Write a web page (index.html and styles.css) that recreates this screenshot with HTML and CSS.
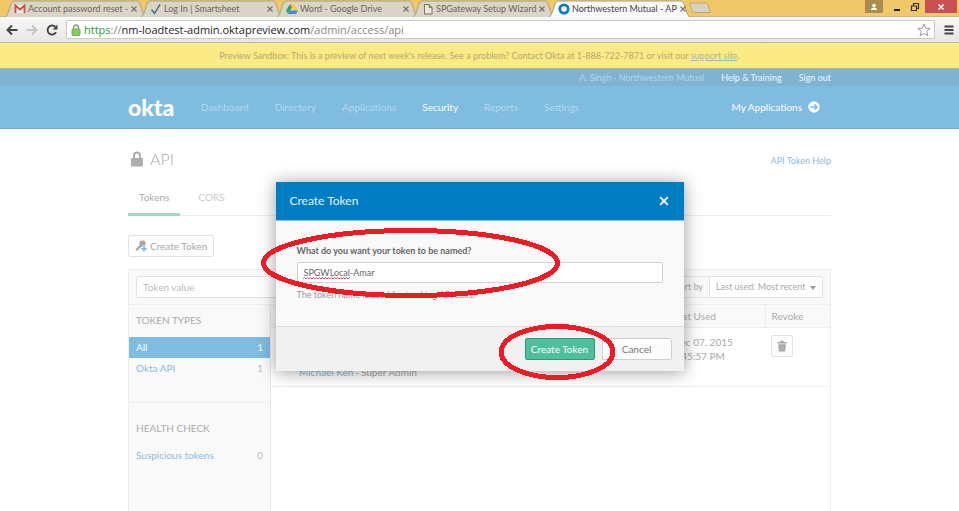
FILE: index.html
```html
<!DOCTYPE html>
<html lang="en">
<head>
<meta charset="utf-8">
<title>Northwestern Mutual - API</title>
<link rel="stylesheet" href="styles.css">
</head>
<body>
<div class="browser">
  <div class="tabstrip">
    <div class="tab">
      <svg class="tab-shape" viewBox="0 0 141 17" preserveAspectRatio="none"><path d="M0 17 Q2 16 3 13 L6 4 Q7 1 9 1 H132 Q134 1 135 4 L138 13 Q139 16 141 17"/></svg>
      <svg class="fav" viewBox="0 0 12 12"><path d="M1 2h10v8H1z" fill="#f3efe9"/><path d="M1.500 10V2.500L6 6.500l4.500-4V10" fill="none" stroke="#d54b3d" stroke-width="1.800"/></svg>
      <span class="tab-title">Account password reset -</span><button class="tab-close" aria-label="Close tab"><svg viewBox="0 0 8 8"><path d="M1.500 1.500l5 5m0-5l-5 5"/></svg></button>
    </div>
    <div class="tab">
      <svg class="tab-shape" viewBox="0 0 141 17" preserveAspectRatio="none"><path d="M0 17 Q2 16 3 13 L6 4 Q7 1 9 1 H132 Q134 1 135 4 L138 13 Q139 16 141 17"/></svg>
      <svg class="fav" viewBox="0 0 12 12"><path d="M1.500 6.500L4.500 10.500L10 1.500" fill="none" stroke="#4d7186" stroke-width="1.500"/></svg>
      <span class="tab-title">Log In | Smartsheet</span><button class="tab-close" aria-label="Close tab"><svg viewBox="0 0 8 8"><path d="M1.500 1.500l5 5m0-5l-5 5"/></svg></button>
    </div>
    <div class="tab">
      <svg class="tab-shape" viewBox="0 0 141 17" preserveAspectRatio="none"><path d="M0 17 Q2 16 3 13 L6 4 Q7 1 9 1 H132 Q134 1 135 4 L138 13 Q139 16 141 17"/></svg>
      <svg class="fav" viewBox="0 0 12 12"><path d="M4 1h4l4 6.500H8z" fill="#f7cb3c"/><path d="M4 1L0 7.500L2 11L6 4.500z" fill="#33a565"/><path d="M4.200 7.500H12L10 11H2z" fill="#4b84dd"/></svg>
      <span class="tab-title">Word - Google Drive</span><button class="tab-close" aria-label="Close tab"><svg viewBox="0 0 8 8"><path d="M1.500 1.500l5 5m0-5l-5 5"/></svg></button>
    </div>
    <div class="tab">
      <svg class="tab-shape" viewBox="0 0 141 17" preserveAspectRatio="none"><path d="M0 17 Q2 16 3 13 L6 4 Q7 1 9 1 H132 Q134 1 135 4 L138 13 Q139 16 141 17"/></svg>
      <svg class="fav" viewBox="0 0 12 12"><path d="M2.500 1.500h4.500l3 3v6.500h-7.500zM7 1.500v3h3" fill="#edeae0" stroke="#77736a"/></svg>
      <span class="tab-title">SPGateway Setup Wizard</span><button class="tab-close" aria-label="Close tab"><svg viewBox="0 0 8 8"><path d="M1.500 1.500l5 5m0-5l-5 5"/></svg></button>
    </div>
    <div class="tab active">
      <svg class="tab-shape" viewBox="0 0 141 17" preserveAspectRatio="none"><path d="M0 17 Q2 16 3 13 L6 4 Q7 1 9 1 H132 Q134 1 135 4 L138 13 Q139 16 141 17"/></svg>
      <svg class="fav" viewBox="0 0 12 12"><circle cx="6" cy="6" r="4.200" fill="none" stroke="#0b7dc3" stroke-width="2.800"/></svg>
      <span class="tab-title">Northwestern Mutual - AP</span><button class="tab-close" aria-label="Close tab"><svg viewBox="0 0 8 8"><path d="M1.500 1.500l5 5m0-5l-5 5"/></svg></button>
    </div>
    <button class="new-tab" aria-label="New tab"><svg viewBox="0 0 24 12"><path d="M1.500 1H17Q19 1 20 3L22.500 10.500H7Q5 10.500 4 8z" fill="#d8d3c1" stroke="#bfa871"/></svg></button>
    <div class="win-controls">
      <button class="win user" aria-label="User"><svg viewBox="0 0 10 10"><circle cx="5" cy="3.500" r="1.800" fill="#fff"/><path d="M2 8V7q1-1.500 3-1.500T8 7v1z" fill="#fff"/></svg></button>
      <button class="win" aria-label="Minimize"><svg viewBox="0 0 10 10"><path d="M2 8h6" stroke="#222" stroke-width="2"/></svg></button>
      <button class="win" aria-label="Restore"><svg viewBox="0 0 10 10"><path d="M1.500 4h5v4.500h-5zM3.500 3.500v-2h5v5h-2" fill="none" stroke="#333" stroke-width="1.200"/></svg></button>
      <button class="win close" aria-label="Close"><svg viewBox="0 0 10 10"><path d="M2.500 2.500l5 5m0-5l-5 5" stroke="#fff" stroke-width="1.500"/></svg></button>
    </div>
  </div>
  <div class="toolbar">
    <button class="tool" aria-label="Back"><svg viewBox="0 0 12 12"><path d="M11.500 6H2M6 1.500L1.500 6L6 10.500" fill="none" stroke="#444" stroke-width="2"/></svg></button>
    <button class="tool" aria-label="Forward"><svg viewBox="0 0 12 12"><path d="M.5 6H10M6 1.500L10.500 6L6 10.500" fill="none" stroke="#c5c5c5" stroke-width="1.800"/></svg></button>
    <button class="tool" aria-label="Reload"><svg viewBox="0 0 12 12"><path d="M10 8.300A4.500 4.500 0 1 1 9.300 2.800" fill="none" stroke="#444" stroke-width="1.900"/><path d="M11.500 .5V5.500H6.500z" fill="#444"/></svg></button>
    <div class="address">
      <svg class="lock" viewBox="0 0 10 12"><path d="M2.500 6V3.500a2.500 2.500 0 0 1 5 0V6" fill="none" stroke="#8c9a82" stroke-width="1.400"/><rect x="1" y="5" width="8" height="6.500" rx="1" fill="#80cf5c" stroke="#5cae3c" stroke-width=".8"/></svg>
      <span class="url"><span class="secure">https</span>://<b>nm-loadtest-admin.oktapreview.com</b>/admin/access/api</span>
      <svg class="star" viewBox="0 0 14 14"><path d="M7 1l1.700 4.200 4.500.3-3.500 2.900 1.200 4.400L7 10.400l-3.900 2.400 1.200-4.400L.8 5.500l4.500-.3z" fill="#fff" stroke="#999"/></svg>
    </div>
    <button class="tool menu" aria-label="Menu"><svg viewBox="0 0 12 12"><path d="M1.500 2.500h9M1.500 6h9M1.500 9.500h9" stroke="#444" stroke-width="2"/></svg></button>
  </div>
</div>

<div class="banner">Preview Sandbox: This is a preview of next week's release. See a problem? Contact Okta at 1-888-722-7871 or visit our <a href="#">support site</a>.</div>

<header>
  <div class="userbar"><div class="wrap userbar-in"><span class="who">A. Singh · Northwestern Mutual</span><a href="#">Help &amp; Training</a><a href="#">Sign out</a></div></div>
  <div class="navbar"><div class="wrap navbar-in">
    <a class="logo" href="#">okta</a>
    <nav><a href="#">Dashboard</a><a href="#">Directory</a><a href="#">Applications</a><a class="on" href="#">Security</a><a href="#">Reports</a><a href="#">Settings</a></nav>
    <a class="myapps" href="#">My Applications<svg viewBox="0 0 12 12"><circle cx="6" cy="6" r="5.700" fill="#fff"/><path d="M2.500 6H9M6.300 3.200L9.100 6L6.300 8.800" fill="none" stroke="#7fbce0" stroke-width="1.500"/></svg></a>
  </div></div>
</header>

<main class="wrap">
  <div class="page-head">
    <h1><svg viewBox="0 0 12 16"><path d="M3 8V4.500a3 3 0 0 1 6 0V8" fill="none" stroke="#adadad" stroke-width="2"/><rect x="0" y="7" width="12" height="8.500" rx="1" fill="#adadad"/></svg>API</h1>
    <a href="#">API Token Help</a>
  </div>
  <div class="subtabs"><a class="on" href="#">Tokens</a><a href="#">CORS</a></div>
  <button class="btn create"><svg viewBox="0 0 12 12"><path d="M1.200 10.300L6.500 5" stroke="#a6a6a6" stroke-width="2.200"/><circle cx="7.500" cy="3.700" r="3.100" fill="#a6a6a6"/><path d="M9 5.500v6M6 8.500h6" stroke="#fff" stroke-width="3"/><path d="M9 6v5.500M6.200 8.700h5.600" stroke="#76b3dc" stroke-width="1.500"/></svg>Create Token</button>
  <section class="panel">
    <div class="filters">
      <input class="search" type="text" placeholder="Token value" aria-label="Token value">
      <div class="sort"><label for="sort">Sort by</label><div class="select-wrap"><select id="sort"><option>Last used: Most recent</option></select></div></div>
    </div>
    <div class="split">
      <aside>
        <h2>TOKEN TYPES</h2>
        <a class="row on" href="#"><span>All</span><span>1</span></a>
        <a class="row" href="#"><span>Okta API</span><span class="num">1</span></a>
        <h2 class="health">HEALTH CHECK</h2>
        <a class="row" href="#"><span>Suspicious tokens</span><span class="num">0</span></a>
      </aside>
      <table>
        <thead><tr><th></th><th class="used">Last Used</th><th class="revoke">Revoke</th></tr></thead>
        <tbody><tr><td class="owner"><a href="#">Michael Ken</a> · Super Admin</td><td>Dec 07, 2015<br>2:45:57 PM</td><td><button class="btn trash" aria-label="Revoke token"><svg viewBox="0 0 10 12"><path d="M.5 2h9v1.500h-9zM3.500 .7h3V2h-3zM1.200 4.200h7.600L8 11.500H2z" fill="#a5a5a5"/><path d="M3.700 5.500v4.500M5 5.500v4.500M6.300 5.500v4.500" stroke="#c2c2c2" stroke-width=".6"/></svg></button></td></tr></tbody>
      </table>
    </div>
  </section>
</main>

<div class="modal" role="dialog" aria-labelledby="modal-title">
  <div class="modal-head"><h2 id="modal-title">Create Token</h2><button aria-label="Close dialog"><svg viewBox="0 0 10 10"><path d="M1.200 1.200l7.600 7.600m0-7.600L1.200 8.800" stroke="#fff" stroke-width="1.900"/></svg></button></div>
  <div class="modal-body">
    <label for="token-name">What do you want your token to be named?</label>
    <div class="name-field"><input id="token-name" type="text" value="SPGWLocal-Amar" spellcheck="false"><svg class="squiggle" viewBox="0 0 47 3"><path d="M0 2l1.500-1.500L3 2l1.500-1.500L6 2l1.500-1.500L9 2l1.500-1.500L12 2l1.500-1.500L15 2l1.500-1.500L18 2l1.500-1.500L21 2l1.500-1.500L24 2l1.500-1.500L27 2l1.500-1.500L30 2l1.500-1.500L33 2l1.500-1.500L36 2l1.500-1.500L39 2l1.500-1.500L42 2l1.500-1.500L45 2l1.500-1.500" fill="none" stroke="#e5514f"/></svg></div>
    <p>The token name is used for tracking API calls.</p>
  </div>
  <div class="modal-foot"><button class="primary">Create Token</button><button class="cancel">Cancel</button></div>
  <svg class="marks" viewBox="0 0 408 190"><ellipse cx="134.500" cy="81" rx="147" ry="32.500"/><ellipse cx="281" cy="170" rx="56" ry="25.500"/></svg>
</div>
</body>
</html>
```
FILE: styles.css
```css
* { box-sizing: border-box; }
body { display: flex; flex-direction: column; margin: 0; height: 100vh; overflow: hidden; background: #fff; font: 10px/14px Lato, "Liberation Sans", sans-serif; color: #aaa; position: relative; }
a { color: #8dbbdb; text-decoration: none; }
button, input, select { font: inherit; margin: 0; padding: 0; border: 0; background: none; color: inherit; }
button { display: inline-flex; align-items: center; justify-content: center; }
h1, h2, p { margin: 0; font-weight: 400; }
svg { display: block; flex: none; }
.wrap { width: 100%; max-width: 703px; margin: 0 auto; }

.browser { font-family: "Open Sans", "Noto Sans", sans-serif; }
.tabstrip { display: flex; height: 17px; background: #f0c869; padding-left: 5px; border-bottom: 1px solid #c9b88e; }
.tab { position: relative; display: flex; align-items: center; flex: 0 1 141px; min-width: 0; height: 17px; padding: 1px 8px 0 9px; margin-right: -5px; gap: 2px; color: #69655a; font-family: Lato, sans-serif; font-size: 9px; }
.tab-shape { position: absolute; left: 0; top: 0; width: 100%; height: 17px; fill: #d9d5c7; stroke: #aa9f80; }
.tab > :not(.tab-shape) { position: relative; }
.fav { width: 12px; height: 12px; }
.tab-title { flex: 1; white-space: nowrap; }
.tab-close svg { width: 8px; height: 8px; stroke: #77736a; stroke-width: 1.2; }
.tab.active { z-index: 1; color: #444; }
.tab.active .tab-shape { fill: #f8f8f8; }
.new-tab svg { width: 24px; height: 12px; }
.new-tab { margin-left: 3px; }
.win-controls { display: flex; margin-left: auto; padding-right: 2px; height: 13px; }
.win { width: 18px; }
.win svg { width: 10px; height: 10px; }
.user { background: #a88d4c; margin-right: 5px; }
.close { width: 32px; background: #c95052; margin-left: 1px; }
.toolbar { display: flex; align-items: center; height: 26px; padding: 0 4px 0 6px; gap: 8px; background: linear-gradient(#f8f8f8, #e6e6e6); border-bottom: 1px solid #b9b9ae; }
.tool svg { width: 12px; height: 12px; }
.address { display: flex; align-items: center; flex: 1; height: 19px; padding: 0 3px 0 4px; gap: 3px; background: #fff; border: 1px solid #c8c8c8; border-radius: 2px; }
.lock { width: 10px; height: 12px; }
.url { flex: 1; font-size: 11px; color: #888; white-space: nowrap; }
.url b { font-weight: 400; color: #222; }
.url .secure { color: #2e9a3a; }
.star { width: 14px; height: 14px; }

.banner { height: 26px; line-height: 25px; font-size: 9px; text-align: center; white-space: nowrap; background: #fcea84; color: #b3a877; border-bottom: 1px solid #b9b884; }
.banner a { color: #a4b9a2; text-decoration: underline; }
.userbar { background: #80b3d0; font-size: 9px; }
.userbar-in { display: flex; justify-content: flex-end; gap: 17px; height: 17px; line-height: 17px; color: #b6d3e3; }
.userbar a { color: #eef6fa; }
.navbar { background: #7fbce0; border-bottom: 1px solid #7ba9c4; }
.navbar-in { display: flex; align-items: center; height: 42px; padding-right: 11px; }
.logo { width: 73px; color: #fff; font-size: 23px; line-height: 22px; font-weight: 900; }
nav { display: flex; gap: 26px; }
nav a { color: #b4d8ed; }
nav .on, .myapps { color: #fff; }
.myapps { display: flex; align-items: center; gap: 6px; margin-left: auto; }
.myapps svg { width: 12px; height: 12px; }

main { display: flex; flex-direction: column; flex: 1; min-height: 0; }
.page-head { display: flex; justify-content: space-between; align-items: center; padding-top: 20px; }
.page-head > a { font-size: 9px; line-height: 14px; padding-top: 3px; }
h1 { display: flex; align-items: center; gap: 7px; padding-left: 3px; font-size: 16px; line-height: 20px; font-weight: 300; }
h1 svg { width: 12px; height: 16px; }
.subtabs { display: flex; height: 47px; border-bottom: 1px solid #eee; }
.subtabs a { height: 47px; padding: 21px 11px 0; color: #ccc; }
.subtabs a + a { padding-left: 18px; }
.subtabs .on { color: #aaa; border-bottom: 3px solid #9bdcc5; }
.btn { border: 1px solid #e2e2e2; border-radius: 2px; background: #fdfdfd; }
.create { align-self: flex-start; height: 22px; margin-top: 19px; padding: 0 6px; gap: 3px; }
.create svg { width: 12px; height: 12px; }
.panel { display: flex; flex-direction: column; flex: 1; margin-top: 12px; border: 1px solid #eee; border-bottom: 0; border-radius: 2px 2px 0 0; }
.filters { display: flex; justify-content: space-between; align-items: center; height: 35px; padding: 0 7px; background: #f9f9f9; border-bottom: 1px solid #eee; }
.search, .sort { height: 22px; border: 1px solid #e2e2e2; border-radius: 2px; background: #fff; }
.search { width: 180px; padding: 0 6px; }
.search::placeholder { color: #bbb; opacity: 1; }
.sort { display: flex; align-items: center; background: #f9f9f9; font-size: 9px; }
.sort label { padding: 0 6px; }
.select-wrap { position: relative; height: 20px; background: #fff; border-left: 1px solid #e2e2e2; }
.select-wrap::after { content: ""; position: absolute; right: 6px; top: 9px; border: 3px solid transparent; border-top: 4px solid #999; border-bottom: 0; }
select { appearance: none; height: 20px; width: 112px; padding: 0 6px; }
.split { display: flex; flex: 1; }
aside { flex: 0 0 142px; background: #f9f9f9; border-right: 1px solid #e8e8e8; }
h2 { font-size: 10px; line-height: 14px; }
aside h2 { padding: 8px 7px 10px; }
.row { display: flex; justify-content: space-between; height: 21px; padding: 0 7px; line-height: 21px; }
.row.on { background: #7fbce0; color: #fff; }
.num { color: #bbb; }
aside .health { margin-top: 23px; padding: 18px 7px 10px; border-top: 1px solid #eee; }
table { flex: 1; align-self: flex-start; border-collapse: collapse; table-layout: fixed; }
th { height: 22px; padding: 0 6px; text-align: left; font-weight: 400; background: #f9f9f9; border-bottom: 1px solid #eee; }
.used { width: 98px; }
.revoke { width: 65px; border-left: 1px solid #eee; }
td { height: 59px; padding: 7px 6px; vertical-align: top; border-bottom: 1px solid #eee; }
.owner { padding-left: 28px; vertical-align: bottom; }
.trash { width: 22px; height: 22px; }
.trash svg { width: 10px; height: 12px; }

.modal { position: absolute; top: 182px; left: 50%; width: 408px; margin-left: -204px; background: #f9f9f9; box-shadow: 0 1px 16px rgba(0,0,0,.4); color: #999; }
.modal-head { display: flex; justify-content: space-between; align-items: center; height: 39px; padding: 0 15px 0 14px; background: #007dc3; border-bottom: 1px solid #8fc6e5; }
.modal-head h2 { color: #e5f2f9; font-size: 12px; }
.modal-head svg { width: 10px; height: 10px; }
.modal-body { padding: 23px 21px 24px; }
.modal-body label { display: block; margin-bottom: 4px; color: #666; font-size: 9px; font-weight: 700; }
.name-field { position: relative; }
.name-field input { width: 100%; height: 21px; padding: 0 6px 1px; background: #fff; border: 1px solid #d2d2d2; border-radius: 2px; color: #666; display: block; font-size: 9px; }
.squiggle { position: absolute; left: 6px; bottom: 3px; width: 47px; height: 3px; }
.modal-body p { margin-top: 5px; font-size: 9px; }
.modal-foot { display: flex; justify-content: flex-end; gap: 7px; padding: 11px 12px; background: #f1f1f1; border-top: 1px solid #ddd; }
.modal-foot button { width: 70px; height: 22px; border: 1px solid #d0d0d0; border-radius: 2px; background: #fcfcfc; color: #777; }
.modal-foot .primary { background: #4cbf9c; border-color: #3b9479; color: #fff; }
.marks { position: absolute; left: 0; top: 0; width: 408px; height: 190px; overflow: visible; fill: none; stroke: #ed1c24; stroke-width: 5; pointer-events: none; shape-rendering: crispEdges; }
```
